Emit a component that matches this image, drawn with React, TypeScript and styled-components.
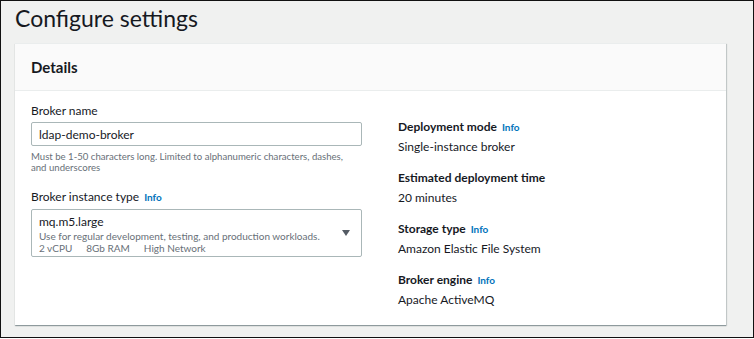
import styled, { createGlobalStyle } from 'styled-components'

const INK = '#16191f'
const MUTED = '#687078'
const LINK = '#0073bb'
const BORDER = '#aab7b8'

const Global = createGlobalStyle`
  html, body { margin: 0; padding: 0; }
  body {
    font-family: Lato, "Open Sans", Arial, sans-serif;
    color: ${INK};
    background: #ffffff;
  }
`

const Page = styled.div`
  width: 752px;
  height: 336px;
  border: 1px solid #111;
  border-right-width: 2px;
  background: #f0f1f0;
  overflow: hidden;
`

const Title = styled.h1`
  margin: 0;
  padding: 1px 0 0 14px;
  height: 41px;
  font-size: 23px;
  font-weight: 400;
  line-height: 32px;
  color: ${INK};
`

const Card = styled.section`
  margin-left: 14px;
  width: 711px;
  height: 281px;
  background: #fff;
  box-shadow: 0 1px 1px 0 rgba(0, 28, 36, 0.3), 1px 1px 1px 0 rgba(0, 28, 36, 0.15);
  border-top: 1px solid #eaeded;
  display: flex;
  flex-direction: column;
`

const CardHeader = styled.div`
  height: 46px;
  background: #fafafa;
  border-bottom: 1px solid #eaeded;
  padding: 0 16px;
  display: flex;
  align-items: center;
`

const CardTitle = styled.h2`
  margin: 0;
  font-size: 15px;
  font-weight: 700;
  color: ${INK};
`

const CardBody = styled.div`
  display: grid;
  grid-template-columns: 331px 1fr;
  column-gap: 36px;
  padding: 12px 16px 0;
`

const LeftCol = styled.div`
  display: flex;
  flex-direction: column;
`

const RightCol = styled.div`
  display: flex;
  flex-direction: column;
  gap: 15px;
  padding-top: 16px;
`

const Field = styled.div<{ gapAfter?: number }>`
  display: flex;
  flex-direction: column;
  margin-bottom: ${p => p.gapAfter ?? 0}px;
`

const Label = styled.div<{ bold?: boolean }>`
  font-size: 12px;
  line-height: 16px;
  font-weight: ${p => (p.bold ? 700 : 400)};
  color: ${INK};
  display: flex;
  align-items: baseline;
  gap: 5px;
`

const Info = styled.a`
  font-size: 10px;
  font-weight: 700;
  color: ${LINK};
  text-decoration: none;
`

const Input = styled.div`
  margin-top: 3px;
  height: 22px;
  border: 1px solid ${BORDER};
  border-radius: 2px;
  padding: 0 7px;
  display: flex;
  align-items: center;
  font-size: 12px;
  color: ${INK};
`

const Hint = styled.div`
  margin-top: 5px;
  font-size: 9.6px;
  line-height: 11px;
  color: ${MUTED};
  max-width: 325px;
`

const Select = styled.div`
  margin-top: 4px;
  height: 46px;
  border: 1px solid ${BORDER};
  border-radius: 2px;
  padding: 0 7px;
  display: flex;
  align-items: center;
  justify-content: space-between;
`

const Option = styled.div`
  display: flex;
  flex-direction: column;
  padding-top: 3px;
`

const OptionName = styled.div`
  font-size: 12px;
  line-height: 14px;
  margin-bottom: 1px;
  color: ${INK};
`

const OptionDesc = styled.div`
  font-size: 10px;
  line-height: 12px;
  color: ${MUTED};
`

const Specs = styled.div`
  display: flex;
  gap: 14px;
  font-size: 10px;
  line-height: 12px;
  color: ${MUTED};
`

const Caret = styled.span`
  width: 0;
  height: 0;
  margin-right: 4px;
  border-left: 4.5px solid transparent;
  border-right: 4.5px solid transparent;
  border-top: 6px solid #545b64;
`

const Value = styled.div`
  margin-top: 4px;
  font-size: 12px;
  line-height: 16px;
  color: ${INK};
`

const summary = [
  { label: 'Deployment mode', info: true, value: 'Single-instance broker' },
  { label: 'Estimated deployment time', info: false, value: '20 minutes' },
  { label: 'Storage type', info: true, value: 'Amazon Elastic File System' },
  { label: 'Broker engine', info: true, value: 'Apache ActiveMQ' },
]

export default function App() {
  return (
    <>
      <Global />
      <Page>
        <Title>Configure settings</Title>
        <Card>
          <CardHeader>
            <CardTitle>Details</CardTitle>
          </CardHeader>
          <CardBody>
            <LeftCol>
              <Field gapAfter={16}>
                <Label>Broker name</Label>
                <Input>ldap-demo-broker</Input>
                <Hint>
                  Must be 1-50 characters long. Limited to alphanumeric characters, dashes,
                  and underscores
                </Hint>
              </Field>
              <Field>
                <Label>
                  Broker instance type <Info>Info</Info>
                </Label>
                <Select>
                  <Option>
                    <OptionName>mq.m5.large</OptionName>
                    <OptionDesc>Use for regular development, testing, and production workloads.</OptionDesc>
                    <Specs>
                      <span>2 vCPU</span>
                      <span>8Gb RAM</span>
                      <span>High Network</span>
                    </Specs>
                  </Option>
                  <Caret />
                </Select>
              </Field>
            </LeftCol>
            <RightCol>
              {summary.map(s => (
                <Field key={s.label}>
                  <Label bold>
                    {s.label} {s.info && <Info>Info</Info>}
                  </Label>
                  <Value>{s.value}</Value>
                </Field>
              ))}
            </RightCol>
          </CardBody>
        </Card>
      </Page>
    </>
  )
}
